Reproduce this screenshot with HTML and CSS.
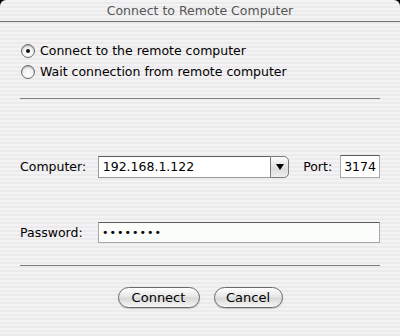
FILE: index.html
```html
<!DOCTYPE html>
<html lang="en">
<head>
  <meta charset="UTF-8">
  <title>Connect to Remote Computer</title>
  <link rel="stylesheet" href="styles.css">
</head>
<body>
  <div class="window">
    <div class="titlebar">Connect to Remote Computer</div>
    <div class="content">
      <div class="radios">
        <label class="radio-row"><span class="radio checked"></span>Connect to the remote computer</label>
        <label class="radio-row"><span class="radio"></span>Wait connection from remote computer</label>
      </div>
      <div class="sep sep-top"></div>
      <div class="field-row computer-row">
        <span class="label">Computer:</span>
        <div class="combo">
          <span class="combo-text">192.168.1.122</span>
          <span class="combo-btn"><svg width="8" height="6" viewBox="0 0 8 6"><path d="M0 0 H8 L4 6 Z" fill="#000"/></svg></span>
        </div>
        <span class="label port-label">Port:</span>
        <div class="textbox port">3174</div>
      </div>
      <div class="field-row password-row">
        <span class="label">Password:</span>
        <div class="textbox password">&#8226;&#8226;&#8226;&#8226;&#8226;&#8226;&#8226;&#8226;</div>
      </div>
      <div class="sep sep-bottom"></div>
      <div class="buttons">
        <button class="pill connect">Connect</button>
        <button class="pill cancel">Cancel</button>
      </div>
    </div>
  </div>
</body>
</html>
```
FILE: styles.css
```css
html, body {
  margin: 0;
  padding: 0;
  background: #000;
}
body {
  font-family: "DejaVu Sans", sans-serif;
  font-size: 12.5px;
  color: #000;
}
.window {
  width: 400px;
  height: 336px;
  border-radius: 6px 6px 0 0;
  overflow: hidden;
  background: repeating-linear-gradient(to bottom, #f4f2f4 0px, #f4f2f4 2px, #ebebeb 2px, #ebebeb 4px);
}
.titlebar {
  height: 21px;
  border-bottom: 1px solid #6e6e6e;
  text-align: center;
  line-height: 21px;
  color: #555;
  font-size: 12.5px;
}
.content {
  padding: 0 20px;
}
.radios {
  padding-top: 18px;
  padding-left: 1px;
}
.radio-row {
  display: flex;
  align-items: center;
  height: 21px;
}
.radio {
  width: 12px;
  height: 12px;
  border-radius: 50%;
  border: 1px solid #6c6c6c;
  background: radial-gradient(circle at 50% 70%, #ffffff 0%, #f2f2f2 50%, #cfcfcf 100%);
  margin-right: 5px;
  position: relative;
  box-shadow: inset 0 1px 1px rgba(0,0,0,0.25);
}
.radio.checked::after {
  content: "";
  position: absolute;
  left: 4px;
  top: 4px;
  width: 4px;
  height: 4px;
  border-radius: 50%;
  background: #111;
}
.sep {
  height: 1px;
  background: #7f7f7f;
}
.sep-top {
  margin-top: 16px;
}
.field-row {
  display: flex;
  align-items: center;
}
.computer-row {
  margin-top: 56px;
}
.password-row {
  margin-top: 44px;
}
.label {
  width: 78px;
}
.combo {
  width: 192px;
  height: 22px;
  display: flex;
  box-sizing: border-box;
}
.combo-text {
  flex: 1;
  background: #fff;
  border: 1px solid #9a9a9a;
  border-top-color: #5c5c5c;
  border-right: none;
  padding-left: 4px;
  line-height: 20px;
}
.combo-btn {
  width: 17px;
  border: 1px solid #7a7a7a;
  border-radius: 0 5px 5px 0;
  background: linear-gradient(to bottom, #fdfdfd, #dcdcdc 60%, #efefef);
  display: flex;
  align-items: center;
  justify-content: center;
}
.port-label {
  width: auto;
  margin-left: 14px;
  margin-right: 8px;
}
.textbox {
  background: #fff;
  border: 1px solid #a8a8a8;
  border-top-color: #5c5c5c;
  box-sizing: border-box;
  padding-left: 3px;
}
.port {
  width: 40px;
  height: 23px;
  line-height: 21px;
  margin-left: auto;
}
.password {
  width: 282px;
  height: 21px;
  line-height: 19px;
  font-size: 11px;
  letter-spacing: 1px;
  background: #fbfdfb;
}
.sep-bottom {
  margin-top: 22px;
}
.buttons {
  display: flex;
  justify-content: center;
  gap: 14px;
  margin-top: 21px;
}
.pill {
  font-family: "DejaVu Sans", sans-serif;
  font-size: 13px;
  height: 21px;
  padding: 0;
  border: 1px solid #6a6a6a;
  border-radius: 11px;
  background: linear-gradient(to bottom, #ffffff 0%, #e6e6e6 45%, #d8d8d8 55%, #f6f6f6 100%);
  color: #000;
  box-shadow: 0 1px 1px rgba(0,0,0,0.2);
}
.connect {
  width: 82px;
}
.cancel {
  width: 69px;
}
```
